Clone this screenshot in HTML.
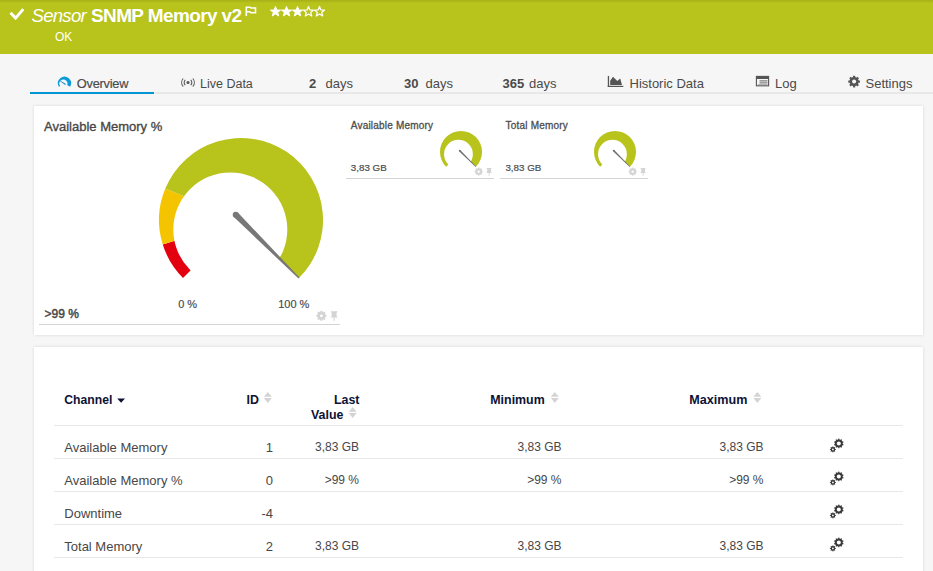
<!DOCTYPE html>
<html><head><meta charset="utf-8">
<style>
html,body{margin:0;padding:0;width:933px;height:571px;overflow:hidden;background:#f6f6f6;font-family:"Liberation Sans",sans-serif}
.abs{position:absolute;white-space:nowrap}
svg.abs{overflow:visible}
#hdr{position:absolute;left:0;top:0;width:933px;height:54px;background:#b8c31b}
#hdr .shade{position:absolute;left:0;top:0;width:933px;height:3px;background:linear-gradient(#a6b018,#b8c31b)}
.tab{position:absolute;top:76px;font-size:13px;color:#4a4a4a;line-height:15px;white-space:nowrap}
.tabline{position:absolute;top:92px;height:2px}
.card{position:absolute;left:34px;width:889px;background:#fff;box-shadow:0 0 3px rgba(0,0,0,.13)}
.med{-webkit-text-stroke:0.35px currentColor}
</style></head><body>
<div id="hdr"><div class="shade"></div>
<svg class="abs" style="left:9px;top:8px" width="16" height="13" viewBox="0 0 16 13"><path d="M1.5 4.7 L6.6 10.1 L14.3 1.1" fill="none" stroke="#fff" stroke-width="2.9"/></svg>
<div class="abs" style="left:31.5px;top:4.8px;font-size:18.6px;letter-spacing:-0.75px;line-height:22px;color:#fff;font-style:italic">Sensor</div>
<div class="abs" style="left:91px;top:4.5px;font-size:19px;letter-spacing:-0.62px;line-height:22px;color:#fff;font-weight:bold">SNMP Memory v2</div>
<svg class="abs" style="left:245px;top:6px" width="12" height="10" viewBox="0 0 12 10"><path d="M1.3 0.5 V10 M1.3 1.2 H4.8 L6 2 H10.5 V6.8 H6 L4.8 5.8 H1.3" fill="none" stroke="#fff" stroke-width="1.6"/></svg>
<svg class="abs" style="left:270px;top:5.5px" width="56" height="11" viewBox="0 0 56 11"><path d="M5.5 0.5 L6.9 4 L10.6 4.1 L7.7 6.4 L8.7 10 L5.5 7.9 L2.3 10 L3.3 6.4 L0.4 4.1 L4.1 4 Z M16.5 0.5 L17.9 4 L21.6 4.1 L18.7 6.4 L19.7 10 L16.5 7.9 L13.3 10 L14.3 6.4 L11.4 4.1 L15.1 4 Z M27.5 0.5 L28.9 4 L32.6 4.1 L29.7 6.4 L30.7 10 L27.5 7.9 L24.3 10 L25.3 6.4 L22.4 4.1 L26.1 4 Z" fill="#fff" stroke="#fff" stroke-width="1" stroke-linejoin="round"/><path d="M38.5 0.5 L39.9 4 L43.6 4.1 L40.7 6.4 L41.7 10 L38.5 7.9 L35.3 10 L36.3 6.4 L33.4 4.1 L37.1 4 Z M49.5 0.5 L50.9 4 L54.6 4.1 L51.7 6.4 L52.7 10 L49.5 7.9 L46.3 10 L47.3 6.4 L44.4 4.1 L48.1 4 Z" fill="none" stroke="#fff" stroke-width="1.25" stroke-linejoin="round"/></svg>
<div class="abs" style="left:55px;top:30px;font-size:12px;line-height:14px;color:#fff">OK</div>
</div>
<div class="tabline" style="left:30px;width:124px;background:#0096d6"></div>
<div class="tabline" style="left:155px;width:778px;background:#e8e8e8"></div>
<svg class="abs" style="left:0;top:0" width="933" height="100" viewBox="0 0 933 100"><path d="M64.50 83.40 L58.84 86.80 A6.6 6.6 0 1 1 70.16 86.80Z" fill="#0a9ad8"/><circle cx="63.40" cy="83.60" r="4.15" fill="#f6f6f6"/><path d="M64.50 83.40 L64.58 83.45 L64.58 83.45 L64.50 83.40Z" fill="#0a9ad8"/><path d="M60.1 81.3 L60.5 80.7 L66 83.9 L65.2 85.1 Z" fill="#0a9ad8"/></svg>
<div class="tab" style="left:76.8px;top:76px;font-size:12.8px;letter-spacing:-0.25px;-webkit-text-stroke:0.18px #4a4a4a">Overview</div>
<svg class="abs" style="left:181px;top:77.5px" width="14" height="9" viewBox="0 0 14 9"><circle cx="7" cy="4.5" r="1.6" fill="#555"/><path d="M4.3 1.8 A3.8 3.8 0 0 0 4.3 7.2 M9.7 1.8 A3.8 3.8 0 0 1 9.7 7.2 M2.2 0.5 A6 6 0 0 0 2.2 8.5 M11.8 0.5 A6 6 0 0 1 11.8 8.5" fill="none" stroke="#555" stroke-width="1.1"/></svg>
<div class="tab" style="left:200px;top:76.5px;font-size:12.5px">Live Data</div>
<div class="tab" style="left:309px"><b>2</b></div>
<div class="tab" style="left:325.5px">days</div>
<div class="tab" style="left:404px"><b>30</b></div>
<div class="tab" style="left:425.5px">days</div>
<div class="tab" style="left:502.5px"><b>365</b></div>
<div class="tab" style="left:529px">days</div>
<svg class="abs" style="left:0;top:0" width="933" height="100" viewBox="0 0 933 100"><rect x="607.8" y="76" width="1.3" height="11" fill="#555"/><rect x="607.8" y="85.8" width="15.5" height="1.2" fill="#555"/><path d="M610.2 85 V80.8 L613 76.8 L617.3 81 L620.2 78.6 L622 85 Z" fill="#555"/><rect x="756.4" y="76.4" width="12.2" height="9.4" fill="none" stroke="#555" stroke-width="1.1"/><rect x="756" y="76" width="13" height="3" fill="#555"/><path d="M759.5 80.9 H767.5 M759.5 82.9 H767.5" stroke="#555" stroke-width="0.9"/><path d="M757.8 84.6 H767.5" stroke="#999" stroke-width="0.8"/><g fill="#555"><circle cx="854.1" cy="81.6" r="4.6"/><rect x="853.00" y="75.80" width="2.20" height="5.80" transform="rotate(0.0 854.1 81.6)"/><rect x="853.00" y="75.80" width="2.20" height="5.80" transform="rotate(45.0 854.1 81.6)"/><rect x="853.00" y="75.80" width="2.20" height="5.80" transform="rotate(90.0 854.1 81.6)"/><rect x="853.00" y="75.80" width="2.20" height="5.80" transform="rotate(135.0 854.1 81.6)"/><rect x="853.00" y="75.80" width="2.20" height="5.80" transform="rotate(180.0 854.1 81.6)"/><rect x="853.00" y="75.80" width="2.20" height="5.80" transform="rotate(225.0 854.1 81.6)"/><rect x="853.00" y="75.80" width="2.20" height="5.80" transform="rotate(270.0 854.1 81.6)"/><rect x="853.00" y="75.80" width="2.20" height="5.80" transform="rotate(315.0 854.1 81.6)"/></g><circle cx="854.1" cy="81.6" r="2.0" fill="#f6f6f6"/></svg>
<div class="tab" style="left:629.5px">Historic Data</div>
<div class="tab" style="left:775px">Log</div>
<div class="tab" style="left:865.5px">Settings</div>
<div class="card" style="top:106px;height:229px"></div>
<div class="card" style="top:347px;height:240px"></div>
<svg class="abs" style="left:0;top:0" width="933" height="571" viewBox="0 0 933 571">
<path d="M241.00 220.00 L183.02 277.98 A82 82 0 0 1 162.75 244.52Z" fill="#e3000f"/><path d="M241.00 220.00 L162.75 244.52 A82 82 0 0 1 165.30 188.49Z" fill="#f5c400"/><path d="M241.00 220.00 L165.30 188.49 A82 82 0 1 1 298.98 277.98Z" fill="#b8c31b"/><circle cx="230.30" cy="229.50" r="57" fill="#fff"/><path d="M233.58 216.82 L298.49 278.48 L299.48 277.49 L237.82 212.58Z" fill="#787878"/><circle cx="235.70" cy="214.70" r="3.0" fill="#787878"/><path d="M461.00 151.90 L446.15 166.75 A21 21 0 1 1 475.85 166.75Z" fill="#b8c31b"/><circle cx="458.45" cy="154.20" r="14.4" fill="#fff"/><path d="M459.06 151.16 L475.67 166.93 L476.03 166.57 L460.26 149.96Z" fill="#707070"/><circle cx="459.66" cy="150.56" r="0.85" fill="#707070"/><path d="M615.00 151.90 L600.15 166.75 A21 21 0 1 1 629.85 166.75Z" fill="#b8c31b"/><circle cx="612.45" cy="154.20" r="14.4" fill="#fff"/><path d="M613.06 151.16 L629.67 166.93 L630.03 166.57 L614.26 149.96Z" fill="#707070"/><circle cx="613.66" cy="150.56" r="0.85" fill="#707070"/><g fill="#d4d4d4"><circle cx="321.4" cy="315.8" r="4.2"/><rect x="320.45" y="310.80" width="1.90" height="5.00" transform="rotate(0.0 321.4 315.8)"/><rect x="320.45" y="310.80" width="1.90" height="5.00" transform="rotate(45.0 321.4 315.8)"/><rect x="320.45" y="310.80" width="1.90" height="5.00" transform="rotate(90.0 321.4 315.8)"/><rect x="320.45" y="310.80" width="1.90" height="5.00" transform="rotate(135.0 321.4 315.8)"/><rect x="320.45" y="310.80" width="1.90" height="5.00" transform="rotate(180.0 321.4 315.8)"/><rect x="320.45" y="310.80" width="1.90" height="5.00" transform="rotate(225.0 321.4 315.8)"/><rect x="320.45" y="310.80" width="1.90" height="5.00" transform="rotate(270.0 321.4 315.8)"/><rect x="320.45" y="310.80" width="1.90" height="5.00" transform="rotate(315.0 321.4 315.8)"/></g><circle cx="321.4" cy="315.8" r="1.4" fill="#fff"/><path d="M331.00 311.20 L337.30 311.20 L337.30 312.40 L336.60 312.40 L336.60 316.00 L337.80 317.50 L334.70 317.50 L334.70 320.80 L333.60 320.80 L333.60 317.50 L330.50 317.50 L331.70 316.00 L331.70 312.40 L331.00 312.40 Z" fill="#d4d4d4"/><g fill="#d4d4d4"><circle cx="478.7" cy="171.6" r="3.3"/><rect x="477.95" y="167.60" width="1.50" height="4.00" transform="rotate(0.0 478.7 171.6)"/><rect x="477.95" y="167.60" width="1.50" height="4.00" transform="rotate(45.0 478.7 171.6)"/><rect x="477.95" y="167.60" width="1.50" height="4.00" transform="rotate(90.0 478.7 171.6)"/><rect x="477.95" y="167.60" width="1.50" height="4.00" transform="rotate(135.0 478.7 171.6)"/><rect x="477.95" y="167.60" width="1.50" height="4.00" transform="rotate(180.0 478.7 171.6)"/><rect x="477.95" y="167.60" width="1.50" height="4.00" transform="rotate(225.0 478.7 171.6)"/><rect x="477.95" y="167.60" width="1.50" height="4.00" transform="rotate(270.0 478.7 171.6)"/><rect x="477.95" y="167.60" width="1.50" height="4.00" transform="rotate(315.0 478.7 171.6)"/></g><circle cx="478.7" cy="171.6" r="1.2" fill="#fff"/><path d="M486.68 167.90 L491.52 167.90 L491.52 168.89 L490.98 168.89 L490.98 171.85 L491.90 173.08 L489.52 173.08 L489.52 175.80 L488.68 175.80 L488.68 173.08 L486.30 173.08 L487.22 171.85 L487.22 168.89 L486.68 168.89 Z" fill="#d4d4d4"/><g fill="#d4d4d4"><circle cx="632.7" cy="171.6" r="3.3"/><rect x="631.95" y="167.60" width="1.50" height="4.00" transform="rotate(0.0 632.7 171.6)"/><rect x="631.95" y="167.60" width="1.50" height="4.00" transform="rotate(45.0 632.7 171.6)"/><rect x="631.95" y="167.60" width="1.50" height="4.00" transform="rotate(90.0 632.7 171.6)"/><rect x="631.95" y="167.60" width="1.50" height="4.00" transform="rotate(135.0 632.7 171.6)"/><rect x="631.95" y="167.60" width="1.50" height="4.00" transform="rotate(180.0 632.7 171.6)"/><rect x="631.95" y="167.60" width="1.50" height="4.00" transform="rotate(225.0 632.7 171.6)"/><rect x="631.95" y="167.60" width="1.50" height="4.00" transform="rotate(270.0 632.7 171.6)"/><rect x="631.95" y="167.60" width="1.50" height="4.00" transform="rotate(315.0 632.7 171.6)"/></g><circle cx="632.7" cy="171.6" r="1.2" fill="#fff"/><path d="M640.68 167.90 L645.52 167.90 L645.52 168.89 L644.98 168.89 L644.98 171.85 L645.90 173.08 L643.52 173.08 L643.52 175.80 L642.68 175.80 L642.68 173.08 L640.30 173.08 L641.22 171.85 L641.22 168.89 L640.68 168.89 Z" fill="#d4d4d4"/><rect x="39" y="324" width="301" height="1" fill="#d4d4d4"/><rect x="346" y="178" width="148" height="1" fill="#d4d4d4"/><rect x="500" y="178" width="148" height="1" fill="#d4d4d4"/></svg>
<div class="abs" style="left:44px;top:119.00px;font-size:13px;line-height:15px;color:#474747;-webkit-text-stroke:0.35px #474747">Available Memory %</div>
<div class="abs" style="left:44.5px;top:306.84px;font-size:12px;line-height:14px;color:#474747;-webkit-text-stroke:0.45px #474747">&gt;99 %</div>
<div class="abs" style="left:178.2px;top:297.99px;font-size:11px;line-height:13px;color:#474747;-webkit-text-stroke:0.15px #474747">0 %</div>
<div class="abs" style="left:278.2px;top:297.99px;font-size:11px;line-height:13px;color:#474747;-webkit-text-stroke:0.15px #474747">100 %</div>
<div class="abs" style="left:350.8px;top:120.13px;font-size:10px;line-height:12px;color:#4d4d4d;-webkit-text-stroke:0.3px #4d4d4d;letter-spacing:0.2px">Available Memory</div>
<div class="abs" style="left:350.8px;top:162.00px;font-size:9.8px;line-height:12px;color:#4d4d4d;-webkit-text-stroke:0.2px #4d4d4d">3,83 GB</div>
<div class="abs" style="left:505.6px;top:120.13px;font-size:10px;line-height:12px;color:#4d4d4d;-webkit-text-stroke:0.3px #4d4d4d;letter-spacing:0.2px">Total Memory</div>
<div class="abs" style="left:505.4px;top:162.00px;font-size:9.8px;line-height:12px;color:#4d4d4d;-webkit-text-stroke:0.2px #4d4d4d">3,83 GB</div>
<svg class="abs" style="left:0;top:0" width="933" height="571" viewBox="0 0 933 571">
<rect x="54" y="425" width="849" height="1" fill="#e8e8e8"/><rect x="54" y="458" width="849" height="1" fill="#e8e8e8"/><rect x="54" y="491" width="849" height="1" fill="#e8e8e8"/><rect x="54" y="524" width="849" height="1" fill="#e8e8e8"/><rect x="54" y="557" width="849" height="1" fill="#e8e8e8"/><path d="M117.2 398.6 H125 L121.1 402.8Z" fill="#0d1235"/><path d="M263.8 396.8 L267.8 392.1 L271.8 396.8Z M263.8 398.1 L267.8 403.0 L271.8 398.1Z" fill="#d4d4d4"/><path d="M348.7 411.8 L352.7 407.1 L356.7 411.8Z M348.7 413.1 L352.7 418.0 L356.7 413.1Z" fill="#d4d4d4"/><path d="M550.8 396.8 L554.8 392.1 L558.8 396.8Z M550.8 398.1 L554.8 403.0 L558.8 398.1Z" fill="#d4d4d4"/><path d="M753.4 396.8 L757.4 392.1 L761.4 396.8Z M753.4 398.1 L757.4 403.0 L761.4 398.1Z" fill="#d4d4d4"/><g fill="#3a3a3a"><circle cx="838.8" cy="443.4" r="3.9"/><rect x="838.20" y="438.60" width="1.20" height="4.80" transform="rotate(0.0 838.8 443.4)"/><rect x="838.20" y="438.60" width="1.20" height="4.80" transform="rotate(36.0 838.8 443.4)"/><rect x="838.20" y="438.60" width="1.20" height="4.80" transform="rotate(72.0 838.8 443.4)"/><rect x="838.20" y="438.60" width="1.20" height="4.80" transform="rotate(108.0 838.8 443.4)"/><rect x="838.20" y="438.60" width="1.20" height="4.80" transform="rotate(144.0 838.8 443.4)"/><rect x="838.20" y="438.60" width="1.20" height="4.80" transform="rotate(180.0 838.8 443.4)"/><rect x="838.20" y="438.60" width="1.20" height="4.80" transform="rotate(216.0 838.8 443.4)"/><rect x="838.20" y="438.60" width="1.20" height="4.80" transform="rotate(252.0 838.8 443.4)"/><rect x="838.20" y="438.60" width="1.20" height="4.80" transform="rotate(288.0 838.8 443.4)"/><rect x="838.20" y="438.60" width="1.20" height="4.80" transform="rotate(324.0 838.8 443.4)"/></g><circle cx="838.8" cy="443.4" r="2.0" fill="#fff"/><g fill="#3a3a3a"><circle cx="832.9" cy="449.4" r="2.3"/><rect x="832.45" y="446.40" width="0.90" height="3.00" transform="rotate(0.0 832.9 449.4)"/><rect x="832.45" y="446.40" width="0.90" height="3.00" transform="rotate(45.0 832.9 449.4)"/><rect x="832.45" y="446.40" width="0.90" height="3.00" transform="rotate(90.0 832.9 449.4)"/><rect x="832.45" y="446.40" width="0.90" height="3.00" transform="rotate(135.0 832.9 449.4)"/><rect x="832.45" y="446.40" width="0.90" height="3.00" transform="rotate(180.0 832.9 449.4)"/><rect x="832.45" y="446.40" width="0.90" height="3.00" transform="rotate(225.0 832.9 449.4)"/><rect x="832.45" y="446.40" width="0.90" height="3.00" transform="rotate(270.0 832.9 449.4)"/><rect x="832.45" y="446.40" width="0.90" height="3.00" transform="rotate(315.0 832.9 449.4)"/></g><circle cx="832.9" cy="449.4" r="0.9" fill="#fff"/><g fill="#3a3a3a"><circle cx="838.8" cy="476.4" r="3.9"/><rect x="838.20" y="471.60" width="1.20" height="4.80" transform="rotate(0.0 838.8 476.4)"/><rect x="838.20" y="471.60" width="1.20" height="4.80" transform="rotate(36.0 838.8 476.4)"/><rect x="838.20" y="471.60" width="1.20" height="4.80" transform="rotate(72.0 838.8 476.4)"/><rect x="838.20" y="471.60" width="1.20" height="4.80" transform="rotate(108.0 838.8 476.4)"/><rect x="838.20" y="471.60" width="1.20" height="4.80" transform="rotate(144.0 838.8 476.4)"/><rect x="838.20" y="471.60" width="1.20" height="4.80" transform="rotate(180.0 838.8 476.4)"/><rect x="838.20" y="471.60" width="1.20" height="4.80" transform="rotate(216.0 838.8 476.4)"/><rect x="838.20" y="471.60" width="1.20" height="4.80" transform="rotate(252.0 838.8 476.4)"/><rect x="838.20" y="471.60" width="1.20" height="4.80" transform="rotate(288.0 838.8 476.4)"/><rect x="838.20" y="471.60" width="1.20" height="4.80" transform="rotate(324.0 838.8 476.4)"/></g><circle cx="838.8" cy="476.4" r="2.0" fill="#fff"/><g fill="#3a3a3a"><circle cx="832.9" cy="482.4" r="2.3"/><rect x="832.45" y="479.40" width="0.90" height="3.00" transform="rotate(0.0 832.9 482.4)"/><rect x="832.45" y="479.40" width="0.90" height="3.00" transform="rotate(45.0 832.9 482.4)"/><rect x="832.45" y="479.40" width="0.90" height="3.00" transform="rotate(90.0 832.9 482.4)"/><rect x="832.45" y="479.40" width="0.90" height="3.00" transform="rotate(135.0 832.9 482.4)"/><rect x="832.45" y="479.40" width="0.90" height="3.00" transform="rotate(180.0 832.9 482.4)"/><rect x="832.45" y="479.40" width="0.90" height="3.00" transform="rotate(225.0 832.9 482.4)"/><rect x="832.45" y="479.40" width="0.90" height="3.00" transform="rotate(270.0 832.9 482.4)"/><rect x="832.45" y="479.40" width="0.90" height="3.00" transform="rotate(315.0 832.9 482.4)"/></g><circle cx="832.9" cy="482.4" r="0.9" fill="#fff"/><g fill="#3a3a3a"><circle cx="838.8" cy="509.4" r="3.9"/><rect x="838.20" y="504.60" width="1.20" height="4.80" transform="rotate(0.0 838.8 509.4)"/><rect x="838.20" y="504.60" width="1.20" height="4.80" transform="rotate(36.0 838.8 509.4)"/><rect x="838.20" y="504.60" width="1.20" height="4.80" transform="rotate(72.0 838.8 509.4)"/><rect x="838.20" y="504.60" width="1.20" height="4.80" transform="rotate(108.0 838.8 509.4)"/><rect x="838.20" y="504.60" width="1.20" height="4.80" transform="rotate(144.0 838.8 509.4)"/><rect x="838.20" y="504.60" width="1.20" height="4.80" transform="rotate(180.0 838.8 509.4)"/><rect x="838.20" y="504.60" width="1.20" height="4.80" transform="rotate(216.0 838.8 509.4)"/><rect x="838.20" y="504.60" width="1.20" height="4.80" transform="rotate(252.0 838.8 509.4)"/><rect x="838.20" y="504.60" width="1.20" height="4.80" transform="rotate(288.0 838.8 509.4)"/><rect x="838.20" y="504.60" width="1.20" height="4.80" transform="rotate(324.0 838.8 509.4)"/></g><circle cx="838.8" cy="509.4" r="2.0" fill="#fff"/><g fill="#3a3a3a"><circle cx="832.9" cy="515.4" r="2.3"/><rect x="832.45" y="512.40" width="0.90" height="3.00" transform="rotate(0.0 832.9 515.4)"/><rect x="832.45" y="512.40" width="0.90" height="3.00" transform="rotate(45.0 832.9 515.4)"/><rect x="832.45" y="512.40" width="0.90" height="3.00" transform="rotate(90.0 832.9 515.4)"/><rect x="832.45" y="512.40" width="0.90" height="3.00" transform="rotate(135.0 832.9 515.4)"/><rect x="832.45" y="512.40" width="0.90" height="3.00" transform="rotate(180.0 832.9 515.4)"/><rect x="832.45" y="512.40" width="0.90" height="3.00" transform="rotate(225.0 832.9 515.4)"/><rect x="832.45" y="512.40" width="0.90" height="3.00" transform="rotate(270.0 832.9 515.4)"/><rect x="832.45" y="512.40" width="0.90" height="3.00" transform="rotate(315.0 832.9 515.4)"/></g><circle cx="832.9" cy="515.4" r="0.9" fill="#fff"/><g fill="#3a3a3a"><circle cx="838.8" cy="542.4" r="3.9"/><rect x="838.20" y="537.60" width="1.20" height="4.80" transform="rotate(0.0 838.8 542.4)"/><rect x="838.20" y="537.60" width="1.20" height="4.80" transform="rotate(36.0 838.8 542.4)"/><rect x="838.20" y="537.60" width="1.20" height="4.80" transform="rotate(72.0 838.8 542.4)"/><rect x="838.20" y="537.60" width="1.20" height="4.80" transform="rotate(108.0 838.8 542.4)"/><rect x="838.20" y="537.60" width="1.20" height="4.80" transform="rotate(144.0 838.8 542.4)"/><rect x="838.20" y="537.60" width="1.20" height="4.80" transform="rotate(180.0 838.8 542.4)"/><rect x="838.20" y="537.60" width="1.20" height="4.80" transform="rotate(216.0 838.8 542.4)"/><rect x="838.20" y="537.60" width="1.20" height="4.80" transform="rotate(252.0 838.8 542.4)"/><rect x="838.20" y="537.60" width="1.20" height="4.80" transform="rotate(288.0 838.8 542.4)"/><rect x="838.20" y="537.60" width="1.20" height="4.80" transform="rotate(324.0 838.8 542.4)"/></g><circle cx="838.8" cy="542.4" r="2.0" fill="#fff"/><g fill="#3a3a3a"><circle cx="832.9" cy="548.4" r="2.3"/><rect x="832.45" y="545.40" width="0.90" height="3.00" transform="rotate(0.0 832.9 548.4)"/><rect x="832.45" y="545.40" width="0.90" height="3.00" transform="rotate(45.0 832.9 548.4)"/><rect x="832.45" y="545.40" width="0.90" height="3.00" transform="rotate(90.0 832.9 548.4)"/><rect x="832.45" y="545.40" width="0.90" height="3.00" transform="rotate(135.0 832.9 548.4)"/><rect x="832.45" y="545.40" width="0.90" height="3.00" transform="rotate(180.0 832.9 548.4)"/><rect x="832.45" y="545.40" width="0.90" height="3.00" transform="rotate(225.0 832.9 548.4)"/><rect x="832.45" y="545.40" width="0.90" height="3.00" transform="rotate(270.0 832.9 548.4)"/><rect x="832.45" y="545.40" width="0.90" height="3.00" transform="rotate(315.0 832.9 548.4)"/></g><circle cx="832.9" cy="548.4" r="0.9" fill="#fff"/></svg>
<div class="abs" style="left:64.3px;top:393.07px;font-size:12.2px;line-height:15px;font-weight:bold;color:#0d1235;">Channel</div>
<div class="abs" style="left:246.5px;top:393.00px;font-size:12.4px;line-height:15px;font-weight:bold;color:#0d1235;">ID</div>
<div class="abs" style="left:0;width:359.5px;text-align:right;top:393.00px;font-size:12.4px;line-height:15px;font-weight:bold;color:#0d1235;">Last</div>
<div class="abs" style="left:311px;top:407.50px;font-size:12.4px;line-height:15px;font-weight:bold;color:#0d1235;">Value</div>
<div class="abs" style="left:490.3px;top:393.00px;font-size:12.4px;line-height:15px;font-weight:bold;color:#0d1235;">Minimum</div>
<div class="abs" style="left:689.3px;top:392.93px;font-size:12.6px;line-height:15px;font-weight:bold;color:#0d1235;">Maximum</div>
<div class="abs" style="left:64.3px;top:439.70px;font-size:13px;line-height:15px;color:#474747;">Available Memory</div>
<div class="abs" style="left:0;width:273px;text-align:right;top:439.70px;font-size:13px;line-height:15px;color:#474747;">1</div>
<div class="abs" style="left:0;width:359px;text-align:right;top:440.04px;font-size:12px;line-height:15px;color:#474747;">3,83 GB</div>
<div class="abs" style="left:0;width:561.5px;text-align:right;top:440.04px;font-size:12px;line-height:15px;color:#474747;">3,83 GB</div>
<div class="abs" style="left:0;width:763.5px;text-align:right;top:440.04px;font-size:12px;line-height:15px;color:#474747;">3,83 GB</div>
<div class="abs" style="left:64.3px;top:472.70px;font-size:13px;line-height:15px;color:#474747;">Available Memory %</div>
<div class="abs" style="left:0;width:273px;text-align:right;top:472.70px;font-size:13px;line-height:15px;color:#474747;">0</div>
<div class="abs" style="left:0;width:359px;text-align:right;top:473.04px;font-size:12px;line-height:15px;color:#474747;">&gt;99 %</div>
<div class="abs" style="left:0;width:561.5px;text-align:right;top:473.04px;font-size:12px;line-height:15px;color:#474747;">&gt;99 %</div>
<div class="abs" style="left:0;width:763.5px;text-align:right;top:473.04px;font-size:12px;line-height:15px;color:#474747;">&gt;99 %</div>
<div class="abs" style="left:64.3px;top:505.70px;font-size:13px;line-height:15px;color:#474747;">Downtime</div>
<div class="abs" style="left:0;width:273px;text-align:right;top:505.70px;font-size:13px;line-height:15px;color:#474747;">-4</div>
<div class="abs" style="left:64.3px;top:538.70px;font-size:13px;line-height:15px;color:#474747;">Total Memory</div>
<div class="abs" style="left:0;width:273px;text-align:right;top:538.70px;font-size:13px;line-height:15px;color:#474747;">2</div>
<div class="abs" style="left:0;width:359px;text-align:right;top:539.04px;font-size:12px;line-height:15px;color:#474747;">3,83 GB</div>
<div class="abs" style="left:0;width:561.5px;text-align:right;top:539.04px;font-size:12px;line-height:15px;color:#474747;">3,83 GB</div>
<div class="abs" style="left:0;width:763.5px;text-align:right;top:539.04px;font-size:12px;line-height:15px;color:#474747;">3,83 GB</div>
</body></html>
